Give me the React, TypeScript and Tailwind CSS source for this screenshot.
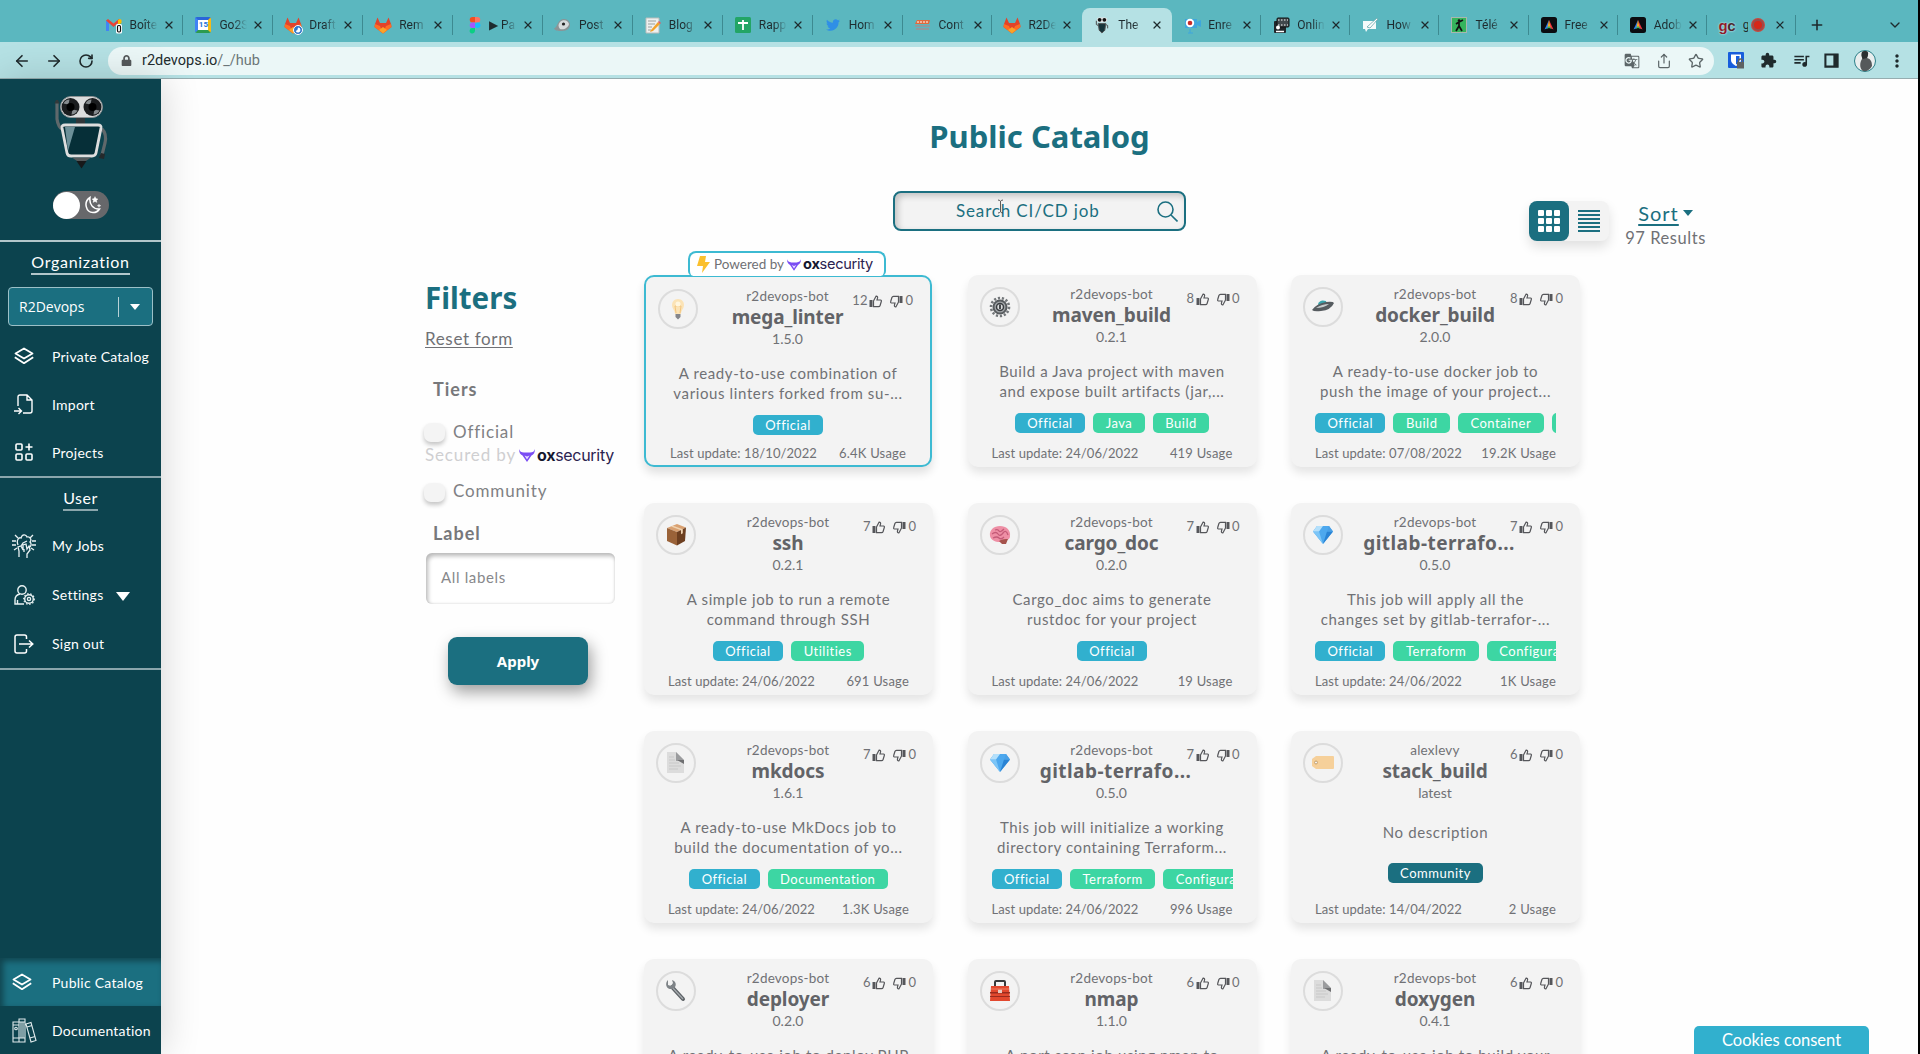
import React from "react";
import { ArrowLeft, ArrowRight, RotateCw, Plus, ChevronDown, X, Star, Share } from "lucide-react";
import { FaTwitter, FaLock } from "react-icons/fa";
import { MdExtension, MdQueueMusic, MdMoreVert, MdGTranslate } from "react-icons/md";

/* ---------- browser tab icons ---------- */

const Gitlab = () => (
  <svg viewBox="0 0 18 17" className="h-[17px] w-[18px]">
    <path d="M1 7 3.500 0.500 6 6h6l2.500-5.500L17 7l.5 3L9 16.500.5 10z" fill="#e24329" />
    <path d="M9 16.500.5 10 1 7l5 2zM9 16.500l8.500-6.500L17 7l-5 2z" fill="#fc6d26" />
    <path d="M9 16.500 5 13l4-3 4 3z" fill="#fca326" />
  </svg>
);

const TabIcon = ({ kind }: { kind: string }) => {
  switch (kind) {
    case "gmail":
      return (
        <svg viewBox="0 0 18 18" className="size-[18px]">
          <path d="M1 4v11h3V7z" fill="#4285f4" />
          <path d="M13 7v8h3V4z" fill="#34a853" />
          <path d="M1 4.500 3 3l5.500 4.500L14 3l2 1.500-7.500 6.500z" fill="#ea4335" />
          <path d="m13 4 2-1 1.500 1v3L13 9z" fill="#fbbc04" />
          <rect x="11" y="8" width="6" height="9.500" rx="1.500" fill="#fff" />
          <rect x="12.500" y="9.500" width="3" height="6.500" rx="1.200" fill="none" stroke="#111" strokeWidth="1.200" />
        </svg>
      );
    case "calendar":
      return (
        <div className="flex size-[16px] items-center justify-center rounded-[2px] border-[3px] border-t-[#2a66d9] border-r-[#f6bb16] border-b-[#2c9b50] border-l-[#3f83f5] bg-white text-[8px] font-bold text-[#2474d8]">15</div>
      );
    case "draft":
      return (
        <div className="relative">
          <Gitlab />
          <svg viewBox="0 0 10 10" className="absolute -right-px -bottom-px size-[10px]">
            <circle cx="5" cy="5" r="4.500" fill="#2f76c9" stroke="#fff" />
            <path d="M5 2.500a2.500 2.500 0 1 1-2.300 3.500Q5 5.500 5 2.500z" fill="#fff" />
          </svg>
        </div>
      );
    case "gitlab":
      return <Gitlab />;
    case "figma":
      return (
        <svg viewBox="0 0 12 17" className="ml-1 h-[17px] w-3">
          <path d="M6 0H3.500a2.700 2.700 0 0 0 0 5.500H6z" fill="#f24e1e" />
          <path d="M6 0h2.500a2.700 2.700 0 0 1 0 5.500H6z" fill="#ff7262" />
          <path d="M6 5.500H3.500a2.700 2.700 0 0 0 0 5.500H6z" fill="#a259ff" />
          <circle cx="8.700" cy="8.250" r="2.750" fill="#1abcfe" />
          <path d="M6 11H3.500a2.700 2.700 0 1 0 2.500 3z" fill="#0acf83" />
        </svg>
      );
    case "post":
      return (
        <svg viewBox="0 0 17 14" className="h-[14px] w-[17px]">
          <path d="M1 10C3 9 4 1 10 1c4 0 6 3 6 6s-3 6-8 6c-4 0-7 0-8-3z" fill="#8b9496" />
          <path d="M6 4c3-3 8-2 9 2-1 4-5 6-9 5-2-2-2-5 0-7z" fill="#d6dbdc" />
          <circle cx="9.500" cy="6" r="1.600" fill="#222" />
        </svg>
      );
    case "memo":
      return (
        <svg viewBox="0 0 16 17" className="h-[17px] w-4">
          <path d="M1 1h13v15H1z" fill="#eef0ef" stroke="#b9bdbb" />
          <path d="M3 4h8M3 7h7M3 10h4M3 13h3" stroke="#9aa09e" />
          <path d="m6 13 7-8 2 2-7 7-3 1z" fill="#f2a32b" />
          <path d="m13 5 1-1 2 2-1 1z" fill="#e25a6a" />
        </svg>
      );
    case "sheets":
      return (
        <svg viewBox="0 0 16 16" className="size-4">
          <rect width="16" height="16" rx="1.500" fill="#23a566" />
          <path d="M8 3v10M3 6h10" stroke="#fff" strokeWidth="1.800" />
        </svg>
      );
    case "twitter":
      return <FaTwitter className="size-[14px] text-[#2f8fe6]" />;
    case "cont":
      return (
        <svg viewBox="0 0 17 12" className="h-3 w-[17px]">
          <path d="M1 5 3 1h13l-1 4z" fill="#e06a3c" />
          <path d="M3 3h11" stroke="#fff" strokeDasharray="2 1" />
          <path d="M1 7h15M2 10h13" stroke="#8f9a9e" strokeWidth="2" />
        </svg>
      );
    case "robot":
      return (
        <svg viewBox="0 0 14 18" className="h-[17px] w-[14px]">
          <rect x="1.500" y="0.500" width="11" height="5" rx="2.500" fill="#e4e4e4" />
          <circle cx="4.500" cy="3" r="2" fill="#111" />
          <circle cx="9.500" cy="3" r="2" fill="#111" />
          <path d="M3 7h8l-1 7-3 3-3-3z" fill="#16343a" stroke="#555" />
          <path d="M1 4v4l2 1M13 12V9l-2-1" fill="none" stroke="#444" />
        </svg>
      );
    case "enre":
      return (
        <svg viewBox="0 0 17 17" className="h-[17px] w-[17px]">
          <path d="M1 2h12v9H1zM13 5l4-2v7l-4-2z" fill="#3ea6dd" />
          <circle cx="6" cy="6" r="4.200" fill="#fff" />
          <circle cx="6" cy="6" r="2.300" fill="#c92a2a" />
          <path d="M6 12v4M4 16h5" stroke="#3ea6dd" />
        </svg>
      );
    case "online":
      return (
        <svg viewBox="0 0 17 17" className="h-[17px] w-[17px]">
          <rect x="1" y="4" width="12" height="12" rx="1" fill="#20262a" />
          <rect x="4" y="1" width="12" height="9" rx="1" fill="#41494d" stroke="#111" />
          <path d="M5 3h10M5 8h10" stroke="#fff" strokeDasharray="1.500 1.500" />
          <circle cx="5" cy="10.500" r="2" fill="#fff" />
          <path d="M3 14.500h8" stroke="#fff" strokeWidth="1.500" />
        </svg>
      );
    case "how":
      return (
        <svg viewBox="0 0 17 16" className="h-4 w-[17px]">
          <path d="M1 4h10l3 1v7H6l-2 3-1-3H1z" fill="#f4fbfb" />
          <path d="m5 10 10-9 1 1-8 9z" fill="#fff" stroke="#66a8ac" strokeWidth=".8" />
        </svg>
      );
    case "tele":
      return (
        <svg viewBox="0 0 16 16" className="size-4">
          <rect x=".5" y=".5" width="15" height="15" fill="#35b45c" stroke="#a9b7ae" />
          <circle cx="8" cy="3.500" r="1.300" fill="#111" />
          <path d="m8 5-3 2M8 5l4-2M8 5v5M8 9l-3 5M8 9l3 5" stroke="#111" strokeWidth="1.700" />
        </svg>
      );
    case "adobe":
      return (
        <svg viewBox="0 0 16 16" className="size-4">
          <rect width="16" height="16" rx="2.500" fill="#0b0c10" />
          <path d="M8 3 3.500 12.500 7 11z" fill="#2d7df0" />
          <path d="m8 3 4.500 9.500L9 11z" fill="#ef3340" />
          <path d="M8 3 6.500 10h3z" fill="#f7a529" />
          <path d="m5 12 3-3 3 3-3-1z" fill="#37b75b" />
        </svg>
      );
    case "gc":
      return (
        <span className="font-['Liberation_Sans'] text-[15px] leading-none font-bold tracking-[-0.5px] text-[#8d1c2c] [text-shadow:0_0_2px_#fff]">
          g<span className="text-[#4a2a30]">c</span>
        </span>
      );
    default:
      return null;
  }
};

const tabs = [
  { kind: "gmail", label: "Boîte" },
  { kind: "calendar", label: "Go2S" },
  { kind: "draft", label: "Draft" },
  { kind: "gitlab", label: "Rem" },
  { kind: "figma", label: "▶ Pa" },
  { kind: "post", label: "Post" },
  { kind: "memo", label: "Blog" },
  { kind: "sheets", label: "Rapp" },
  { kind: "twitter", label: "Hom" },
  { kind: "cont", label: "Cont" },
  { kind: "gitlab", label: "R2De" },
  { kind: "robot", label: "The", active: true },
  { kind: "enre", label: "Enre" },
  { kind: "online", label: "Onlin" },
  { kind: "how", label: "How" },
  { kind: "tele", label: "Télé" },
  { kind: "adobe", label: "Free" },
  { kind: "adobe", label: "Adob" },
  { kind: "gc", label: "g", recording: true },
];

const BrowserBar = () => (
  <header className="font-[Roboto,sans-serif]">
    <div className="flex h-[42px] items-stretch bg-[#5bb7bf] pt-2 pl-[93.500px] text-[12px] text-[#1e2b2e]">
      {tabs.map((t, i) => (
        <div
          key={i}
          className={
            t.active
              ? "relative flex w-[89.900px] shrink-0 items-center rounded-t-lg bg-[#b5e1e4] pl-[11px]"
              : i < 11
                ? "relative flex w-[89.900px] shrink-0 items-center pl-[11px]"
                : "relative flex w-[89.100px] shrink-0 items-center pl-[11px]"
          }
        >
          <span className="flex w-[18px] shrink-0 justify-center">
            <TabIcon kind={t.kind} />
          </span>
          <span
            className={
              t.recording
                ? "ml-[7px] w-[5px] overflow-hidden whitespace-nowrap"
                : "ml-[7px] w-[28px] overflow-hidden whitespace-nowrap [mask-image:linear-gradient(to_right,#000_55%,transparent)]"
            }
          >
            {t.label}
          </span>
          {t.recording && <span className="ml-1 size-3 rounded-full border-2 border-[#9b4a49] bg-[#d62718] ring-1 ring-[#c9483d]" />}
          <X className={t.recording ? "ml-[10px] size-3" : "ml-[5px] size-3"} strokeWidth={2.400} />
          {!t.active && i !== 10 && <span className="absolute top-[7px] right-0 h-5 w-px bg-[#3d8a91]" />}
        </div>
      ))}
      <Plus className="mt-[9px] ml-[13px] size-4" strokeWidth={2.400} />
      <ChevronDown className="mt-[9px] ml-[62px] size-4" strokeWidth={2} />
    </div>
    <div className="flex h-[37px] items-center border-b border-[#96adb0] bg-[#b5e1e4] pt-px pl-[13px] text-[#1f2a2c]">
      <ArrowLeft className="size-[18px]" strokeWidth={2.200} />
      <ArrowRight className="ml-[14px] size-[18px]" strokeWidth={2.200} />
      <RotateCw className="ml-[15px] size-4" strokeWidth={2.400} />
      <div className="ml-[14px] flex h-7 w-[1606px] items-center rounded-full bg-[#ebf7f7] pl-[13px]">
        <FaLock className="size-[11px] text-[#55595b]" />
        <span className="ml-[10px] text-[14.500px] text-[#222c2e]">
          r2devops.io<span className="text-[#6c7678]">/_/hub</span>
        </span>
        <div className="mr-[10px] ml-auto flex items-center gap-4 text-[#5c6668]">
          <MdGTranslate className="size-4" />
          <Share className="size-4" strokeWidth={1.800} />
          <Star className="size-4" strokeWidth={2} />
        </div>
      </div>
      <div className="ml-[14px] flex items-center gap-[15px]">
        <svg viewBox="0 0 17 17" className="size-[17px]">
          <rect width="16" height="16" rx="1" fill="#175ddc" />
          <path d="M3 2.500h10V8c0 3-2.500 4.500-5 6-2.500-1.500-5-3-5-6z" fill="#fff" />
          <path d="M8 4v8.500c2-1.200 3.500-2.500 3.500-4.500V4z" fill="#175ddc" />
          <rect x="9" y="10" width="7" height="6.500" fill="#5e6263" />
          <path d="M10.500 10V9a2 2 0 0 1 4 0v1" fill="none" stroke="#5e6263" strokeWidth="1.300" />
        </svg>
        <MdExtension className="size-[17px]" />
        <MdQueueMusic className="-mr-0.5 size-[19px]" />
        <svg viewBox="0 0 16 16" className="size-[15px]">
          <path d="M1.500 1.500h13v13h-13z" fill="none" stroke="currentColor" strokeWidth="2.200" />
          <path d="M10 1h5v14h-5z" fill="currentColor" />
        </svg>
        <svg viewBox="0 0 22 22" className="size-[22px]">
          <circle cx="11" cy="11" r="10.500" fill="#e9eeee" stroke="#2b7f88" />
          <path d="M8 2c3-2 7-1 6 3l-1 3c4 1 5 4 5 8-2 4-6 6-9 5-4-3-3-9-1-12z" fill="#55595b" />
          <path d="M8 2c3-2 7-1 6 3l-1 3-4 1c-2-2-2-5-1-7z" fill="#2b2f31" />
        </svg>
        <MdMoreVert className="-ml-1 size-5" />
      </div>
    </div>
  </header>
);

/* ---------- sidebar ---------- */

const Robot = () => (
  <svg viewBox="0 0 56 76" className="h-[76px] w-14">
    <path d="M4 8v16q1 8 6 11" fill="none" stroke="#5f686b" strokeWidth="3.200" />
    <path d="M1.500 8.500 3 5h2l1.500 3.500" fill="#33393b" />
    <path d="M49 34q5 5 3 14l-3 12" fill="none" stroke="#5f686b" strokeWidth="3.200" />
    <path d="m46 63 2-5 4 1-1 5z" fill="#24292b" />
    <rect x="23" y="23" width="9" height="6" fill="#30373a" />
    <rect x="7.500" y="1.500" width="42" height="21" rx="10.500" fill="#dcdddd" stroke="#8d9294" />
    <circle cx="17.500" cy="12" r="9" fill="#1b1d1f" />
    <circle cx="39.500" cy="12" r="9" fill="#1b1d1f" />
    <path d="M10.500 8.500q2-4 6-4l-1 5zM24.500 15.500q-2 4-6 4l1-5zM32.500 8.500q2-4 6-4l-1 5zM46.500 15.500q-2 4-6 4l1-5z" fill="#868b8e" />
    <circle cx="17.500" cy="12" r="4" fill="#000" />
    <circle cx="39.500" cy="12" r="4" fill="#000" />
    <path d="M12 30h33q3.500 0 3 3l-5 25q-.6 3-4 3H18q-3.500 0-4-3L9 33q-.5-3 3-3z" fill="#062f38" stroke="#dedede" strokeWidth="2.800" />
    <path d="M12 32h10l-7 24z" fill="#6c9099" />
    <path d="M19 62.500h19l-5 3.500h-9z" fill="#54595b" />
    <path d="M23.500 66h10l-5 7.500z" fill="#17191a" />
  </svg>
);

const LayersIcon = () => (
  <svg viewBox="0 0 20 18" className="h-[18px] w-5" fill="none" stroke="#fff" strokeWidth="1.800" strokeLinejoin="round">
    <path d="M10 1.500 18.500 6.500 10 11.500 1.500 6.500z" />
    <path d="m.8 10.300 9.200 5.900 9.200-5.900" />
  </svg>
);
const ImportIcon = () => (
  <svg viewBox="0 0 20 21" className="h-[21px] w-5" fill="none" stroke="#fff" strokeWidth="1.400">
    <path d="M4 12V3q0-2 2-2h7l5 5v11q0 2-2 2H9M13 1v5h5M0 17h7M4.500 14l3 3-3 3" />
  </svg>
);
const ProjectsIcon = () => (
  <svg viewBox="0 0 18 18" className="size-[18px]" fill="none" stroke="#fff" strokeWidth="1.600">
    <rect x="1" y="1" width="6" height="6" rx="1" />
    <rect x="1" y="11" width="6" height="6" rx="1" />
    <rect x="11" y="11" width="6" height="6" rx="1" />
    <path d="M14 .5v7M10.500 4h7" />
  </svg>
);
const JobsIcon = () => (
  <svg viewBox="0 0 24 25" className="h-[25px] w-6" fill="none" stroke="#e9f2f3" strokeWidth="1.300">
    <path d="M6 12c-2-5 1-8 3-7 1-4 5-4 6-1 3-1 5 3 3 5 2 2 1 5-1 5M7 24v-6l-1-4 3-1 2 4v-5l3-1 1 5 2-3 1 4-3 4v5M9 13l2-3 4-2M12 19v-3M0 8h4M0 12h4M20 8h4M20 12h4M3 2l3 3M21 2l-3 3M2 17l3-2M22 17l-3-2" />
  </svg>
);
const SettingsIcon = () => (
  <svg viewBox="0 0 21 20" className="h-5 w-[21px]" fill="none" stroke="#e9f2f3" strokeWidth="1.400">
    <circle cx="8" cy="5" r="4.200" />
    <path d="M10 19H1v-4q0-5 5-6M3.500 19v-4" />
    <circle cx="15" cy="14" r="4.300" />
    <circle cx="15" cy="14" r="1.600" />
    <circle cx="15" cy="14" r="5.300" strokeDasharray="1.500 1.700" strokeWidth="1.200" />
  </svg>
);
const SignOutIcon = () => (
  <svg viewBox="0 0 20 20" className="size-5" fill="none" stroke="#fff" strokeWidth="1.500">
    <path d="M12.500 5V3q0-2-2-2H3Q1 1 1 3v14q0 2 2 2h7.500q2 0 2-2v-2M5 10h13M15 6.500 18.800 10 15 13.500" />
  </svg>
);
const BooksIcon = () => (
  <svg viewBox="0 0 25 25" className="h-[25px] w-[25px]" fill="none" stroke="#dfeaec" strokeWidth="1.100">
    <path d="M1 4h6v20H1zM7 1h6v23H7zM1 7h6M1 20h6M7 4h6M7 20h6M9 4v16M11 4v16M14 6l5-1.500 5 18-5 1.500zM15 9l5-1.500M18 20l5-1.500" />
    <circle cx="4" cy="10.500" r="1.300" />
  </svg>
);

const NavItem = ({ icon, label, caret }: { icon: React.ReactNode; label: string; caret?: boolean }) => (
  <div className="flex h-full w-full items-center">
    <span className="flex w-[48px] shrink-0 justify-center">{icon}</span>
    <span className="ml-1 text-[14px] whitespace-nowrap tracking-[0.250px] text-white">{label}</span>
    {caret && <span className="mt-1 ml-[13px] border-x-[7.500px] border-t-[9px] border-x-transparent border-t-white" />}
  </div>
);

const Sidebar = () => (
  <aside className="z-10 flex w-[161px] shrink-0 flex-col bg-[#0c434e] shadow-[2px_0_36px_rgba(0,0,0,0.16)]">
    <div className="flex h-[163px] flex-col items-center border-b-2 border-[#b3c6ca] pt-[16px]">
      <Robot />
      <div className="mt-[20px] flex h-7 w-14 items-center rounded-full bg-[#67686b]">
        <span className="size-[27px] rounded-full bg-white" />
        <svg viewBox="0 0 18 18" className="ml-1 size-[18px]" fill="none" stroke="#fff" strokeWidth="1.500">
          <path d="M6 1.500C-1 6 2 16.500 9 16.500c3 0 5-1 6.500-3.500C9 13.500 5 8 6 1.500z" />
          <path d="m11 .5 1 2 2 .5-1.500 1.500.5 2-2-1-2 1 .5-2L8 3l2-.5zM15 8l.5 1.300 1.500.4-1.500.5L15 11.500l-.5-1.300-1.300-.5 1.300-.4z" fill="#fff" strokeWidth=".3" />
        </svg>
      </div>
    </div>
    <div className="flex h-[236px] flex-col border-b-2 border-[#8ba6ac] pt-[10px]">
      <span className="mx-auto h-[23px] border-b-2 border-[#b3c6ca] text-[16px] leading-[20px] tracking-[0.700px] text-white">Organization</span>
      <div className="mx-2 mt-3 flex h-[39px] shrink-0 items-center rounded-[4px] border border-[#9cc0c7] bg-[#1b6f80] pl-[10px]">
        <span className="w-[99px] font-['Open_Sans',sans-serif] text-[14px] text-white">R2Devops</span>
        <span className="h-5 w-px bg-[#b8d2d7]" />
        <span className="ml-[11px] border-x-[5.500px] border-t-[6px] border-x-transparent border-t-white" />
      </div>
      <div className="mt-[6px] h-12"><NavItem icon={<LayersIcon />} label="Private Catalog" /></div>
      <div className="h-12"><NavItem icon={<ImportIcon />} label="Import" /></div>
      <div className="h-12"><NavItem icon={<ProjectsIcon />} label="Projects" /></div>
    </div>
    <div className="flex h-[192px] flex-col border-b-2 border-[#8ba6ac] pt-[9px]">
      <span className="mx-auto h-[24px] shrink-0 border-b-2 border-[#8ba6ac] text-[16px] leading-[22px] tracking-[0.500px] text-white">User</span>
      <div className="mt-[10px] h-[49px]"><NavItem icon={<JobsIcon />} label="My Jobs" /></div>
      <div className="h-[49px]"><NavItem icon={<SettingsIcon />} label="Settings" caret /></div>
      <div className="h-[49px]"><NavItem icon={<SignOutIcon />} label="Sign out" /></div>
    </div>
    <div className="mt-auto h-12 bg-[#1b6f80] shadow-[inset_3px_3px_6px_rgba(0,0,0,0.4)]">
      <NavItem icon={<span className="-ml-1"><LayersIcon /></span>} label="Public Catalog" />
    </div>
    <div className="h-12"><NavItem icon={<BooksIcon />} label="Documentation" /></div>
  </aside>
);

/* ---------- shared bits ---------- */

const OxLogo = ({ small }: { small?: boolean }) => (
  <span className={small ? "flex items-center text-[14.600px]" : "flex items-center text-[16px]"}>
    <svg viewBox="0 0 16 13" className={small ? "h-3 w-[14px]" : "h-[13px] w-4"}>
      <path d="M0 0q1 3.500 5 3.500h6Q15 3.500 16 0q0 5-3.500 6.500L8 13 3.500 6.500Q0 5 0 0z" fill="#7a4df3" />
      <path d="m5.500 6.500 2.500 1 2.500-1L8 10.500z" fill="#e9e2ff" />
    </svg>
    <span className="ml-[2px] font-[Inter,sans-serif] leading-none tracking-[-0.300px] text-[#2b2350]">
      <b className="text-[#15182f]">ox</b>security
    </span>
  </span>
);

const ThumbUp = () => (
  <svg viewBox="0 0 13 13" className="size-[13px]">
    <path d="M.5 5h3v7h-3z" fill="#55565a" />
    <path d="M4.500 6 7 1.200q2-.2 1.500 2L8 5h3.500q1.200.3.800 1.500l-1.200 4q-.4 1.200-1.600 1.200h-5z" fill="none" stroke="#55565a" strokeWidth="1.200" />
  </svg>
);

/* ---------- job pictures ---------- */

const JobIcon = ({ kind }: { kind: string }) => {
  switch (kind) {
    case "bulb":
      return (
        <svg viewBox="0 0 22 22" className="size-[22px]">
          <path d="M11 1c4 0 6 3 6 6 0 4-3 5-3 9H8c0-4-3-5-3-9 0-3 2-6 6-6z" fill="#fbe3b6" />
          <path d="M9 15 8 8h6l-1 7" fill="none" stroke="#f3c57d" />
          <circle cx="11" cy="6" r="2.500" fill="#fff6df" />
          <path d="M8.500 16h5v3L11 21.500 8.500 19z" fill="#85868a" />
        </svg>
      );
    case "gear":
      return (
        <svg viewBox="0 0 22 22" className="size-[22px]">
          <circle cx="11" cy="11" r="9" fill="none" stroke="#73777a" strokeWidth="2.600" strokeDasharray="2.200 1.800" />
          <circle cx="11" cy="11" r="6.500" fill="#a4a8ab" stroke="#585c5f" strokeWidth="2" />
          <circle cx="11" cy="11" r="3.500" fill="#d9dbdc" stroke="#3a3d40" strokeWidth="1.500" />
          <path d="M11 8.500v4.500" stroke="#35383b" strokeWidth="1.800" />
        </svg>
      );
    case "ufo":
      return (
        <svg viewBox="0 0 22 22" className="size-[22px]">
          <path d="M6 8q2-5 8-3l1 5-7 3z" fill="#38a3ab" />
          <path d="M0 14Q4 8 14 6q7-1 8 1-3 7-13 8-7 1-9-1z" fill="#565c60" />
          <path d="M4 12q6-4 13-4-5 4-13 4z" fill="#c8cdce" />
        </svg>
      );
    case "box":
      return (
        <svg viewBox="0 0 22 22" className="size-[22px]">
          <path d="M12 0 21 3.500 12 8 2 4z" fill="#d9a172" />
          <path d="m2 4 10 4v13.500L2 17z" fill="#9a6238" />
          <path d="m21 3.500-9 4.500v13.500l8-4.500z" fill="#6d3f20" />
          <path d="m6 2.500 10 3.700v4l1.800-1V5.300L8 1.700z" fill="#f0d3b0" />
        </svg>
      );
    case "brain":
      return (
        <svg viewBox="0 0 22 22" className="size-[22px]">
          <path d="M1 12C0 6 5 2 11 2s11 4 10 10c0 3-2 4-5 4l-1 4-4-2c-5 0-9-2-10-6z" fill="#ee8fa5" />
          <path d="M10 17c3-2 7-2 9-2l-2 5h-4z" fill="#a5524c" />
          <path d="M3 10q4-3 6 0t5-1 5 2M6 6q3-1 4 1t5-2M4 14q4-2 6 0t5-1" fill="none" stroke="#c45b78" strokeWidth="1.300" />
        </svg>
      );
    case "gem":
      return (
        <svg viewBox="0 0 22 22" className="size-[22px]">
          <path d="M5 2h12l4 5.500L11 20 1 7.500z" fill="#4da8ee" />
          <path d="M1 7.500h6L11 20z" fill="#7cc5f7" />
          <path d="M21 7.500h-6L11 20z" fill="#2a83d4" />
          <path d="m5 2 2 5.500H1zM5 2h6L7 7.500z" fill="#b4e0fb" />
          <path d="m17 2-2 5.500h6z" fill="#4aa0e6" />
        </svg>
      );
    case "page":
      return (
        <svg viewBox="0 0 22 22" className="size-[22px]">
          <path d="M2 0h9l8 8v13H2z" fill="#dcdcdc" />
          <path d="m11 0 8 8-8 1z" fill="#9b9c9e" />
          <path d="M12 8h7v4z" fill="#6e6f71" />
          <path d="M4 5h5M4 8h6M4 11h10M4 14h12M4 17h9" stroke="#c8c8c8" />
        </svg>
      );
    case "label":
      return (
        <svg viewBox="0 0 22 22" className="size-[22px]">
          <path d="M4 4h17q1 0 1 1v11q0 1-1 1H4l-4-3V7z" fill="#f6d09a" />
          <circle cx="4" cy="10.500" r="1.500" fill="#f3f3f3" stroke="#c5a06c" />
        </svg>
      );
    case "wrench":
      return (
        <svg viewBox="0 0 22 22" className="size-[22px]">
          <path d="m7 7 11 12" stroke="#5d6266" strokeWidth="4" strokeLinecap="round" />
          <path d="m7 7 11 12" stroke="#a5aaae" strokeWidth="1.300" />
          <path d="M3 0v5l3 1 2-3-1-3c5 1 5 8 0 9S-1 4 3 0z" fill="#7e8387" />
        </svg>
      );
    case "toolbox":
      return (
        <svg viewBox="0 0 24 24" className="size-6">
          <path d="M7 8V3q0-1 1-1h8q1 0 1 1v5" fill="none" stroke="#37393b" strokeWidth="2" />
          <path d="M3 7h18l1 15H2z" fill="#e2482e" />
          <path d="M2 13h20v1.500H2zM2 17h20v1H2z" fill="#9a2a1d" />
          <path d="M10 10.500h4v3.500h-4z" fill="#e9c9c0" />
          <path d="M3 10h18" stroke="#ef7c61" />
        </svg>
      );
    default:
      return null;
  }
};

type Job = {
  icon: string;
  owner?: string;
  name: string;
  version: string;
  likes: number;
  lines: string[];
  tags: string[];
  updated: string;
  usage: string;
  sponsored?: boolean;
};

const jobs: Job[] = [
  { icon: "bulb", name: "mega_linter", version: "1.5.0", likes: 12, lines: ["A ready-to-use combination of", "various linters forked from su-..."], tags: ["Official"], updated: "18/10/2022", usage: "6.4K", sponsored: true },
  { icon: "gear", name: "maven_build", version: "0.2.1", likes: 8, lines: ["Build a Java project with maven", "and expose built artifacts (jar,..."], tags: ["Official", "Java", "Build"], updated: "24/06/2022", usage: "419" },
  { icon: "ufo", name: "docker_build", version: "2.0.0", likes: 8, lines: ["A ready-to-use docker job to", "push the image of your project..."], tags: ["Official", "Build", "Container", "Docker"], updated: "07/08/2022", usage: "19.2K" },
  { icon: "box", name: "ssh", version: "0.2.1", likes: 7, lines: ["A simple job to run a remote", "command through SSH"], tags: ["Official", "Utilities"], updated: "24/06/2022", usage: "691" },
  { icon: "brain", name: "cargo_doc", version: "0.2.0", likes: 7, lines: ["Cargo_doc aims to generate", "rustdoc for your project"], tags: ["Official"], updated: "24/06/2022", usage: "19" },
  { icon: "gem", name: "gitlab-terrafo...", version: "0.5.0", likes: 7, lines: ["This job will apply all the", "changes set by gitlab-terrafor-..."], tags: ["Official", "Terraform", "Configuration"], updated: "24/06/2022", usage: "1K" },
  { icon: "page", name: "mkdocs", version: "1.6.1", likes: 7, lines: ["A ready-to-use MkDocs job to", "build the documentation of yo..."], tags: ["Official", "Documentation"], updated: "24/06/2022", usage: "1.3K" },
  { icon: "gem", name: "gitlab-terrafo...", version: "0.5.0", likes: 7, lines: ["This job will initialize a working", "directory containing Terraform..."], tags: ["Official", "Terraform", "Configuration"], updated: "24/06/2022", usage: "996" },
  { icon: "label", owner: "alexlevy", name: "stack_build", version: "latest", likes: 6, lines: ["No description"], tags: ["Community"], updated: "14/04/2022", usage: "2" },
  { icon: "wrench", name: "deployer", version: "0.2.0", likes: 6, lines: ["A ready-to-use job to deploy PHP"], tags: [], updated: "", usage: "" },
  { icon: "toolbox", name: "nmap", version: "1.1.0", likes: 6, lines: ["A port scan job using nmap to"], tags: [], updated: "", usage: "" },
  { icon: "page", name: "doxygen", version: "0.4.1", likes: 6, lines: ["A ready-to-use job to build your"], tags: [], updated: "", usage: "" },
];

const tagColor = (t: string) =>
  t === "Official" ? "bg-[#31b0ce]" : t === "Community" ? "bg-[#1b6f80]" : "bg-[#3dd6a3]";

const JobCard = ({ job }: { job: Job }) => {
  const short = job.lines[0] === "No description";
  return (
    <article
      className={
        job.sponsored
          ? "relative flex h-[192px] w-[288px] flex-col rounded-[10px] border-2 border-[#3dbad2] bg-[#f3f3f3] pb-0.5 text-[#707175] shadow-[0_6px_10px_rgba(0,0,0,0.12)]"
          : "relative flex h-[192px] w-[289px] flex-col rounded-[10px] bg-[#f3f3f3] pb-[4px] text-[#707175] shadow-[0_6px_10px_rgba(0,0,0,0.1)]"
      }
    >
      {job.sponsored && (
        <div className="absolute -top-[26px] left-[42px] flex h-[25px] w-[198px] items-center rounded-[8px] rounded-b-[5px] border-2 border-b-0 border-[#3dbad2] bg-white pl-[7px]">
          <svg viewBox="0 0 13 17" className="h-[17px] w-[13px]">
            <path d="M3 0h6L8 6h5L5 17l1-7H0z" fill="#fbc02d" />
          </svg>
          <span className="mr-[3px] ml-[4px] text-[13.500px] whitespace-nowrap">Powered by</span>
          <OxLogo small />
        </div>
      )}
      <div className="grid h-[72px] shrink-0 pt-[10px]">
        <div className="mt-[2px] ml-3 flex size-10 items-center justify-center justify-self-start rounded-full border-2 border-[#dcdcdc] [grid-area:1/1]">
          <JobIcon kind={job.icon} />
        </div>
        <div className="flex flex-col items-center justify-self-center pr-px text-center [grid-area:1/1]">
          <span className="h-[18px] text-[13.500px] leading-[18px] tracking-[0.200px]">{job.owner ?? "r2devops-bot"}</span>
          <h3
            className={
              job.name.includes("...")
                ? "h-6 pl-2 font-['Noto_Sans',sans-serif] text-[19px] leading-6 font-bold tracking-[0.450px] text-[#626367]"
                : "h-6 font-['Noto_Sans',sans-serif] text-[19px] leading-6 font-bold tracking-[-0.100px] text-[#626367]"
            }
          >
            {job.name}
          </h3>
          <span className="h-5 text-[14px] leading-5">{job.version}</span>
        </div>
        <div className="mt-[4px] mr-[17px] flex h-5 items-center justify-self-end text-[13px] [grid-area:1/1]">
          <span className="mr-[2px]">{job.likes}</span>
          <ThumbUp />
          <span className="mr-[2px] ml-2 rotate-180">
            <ThumbUp />
          </span>
          <span>0</span>
        </div>
      </div>
      <div className={short ? "pt-[19px]" : "pt-[14px]"}>
        {job.lines.map((l) => (
          <p key={l} className="h-5 text-center text-[15px] leading-5 whitespace-nowrap tracking-[0.620px]">
            {l}
          </p>
        ))}
      </div>
      <div className={short ? "mx-6 mt-[21px] flex justify-center-safe gap-2 overflow-hidden" : "mx-6 mt-3 flex justify-center-safe gap-2 overflow-hidden"}>
        {job.tags.map((t) => (
          <span key={t} className={`h-5 shrink-0 rounded-[5px] px-[12.500px] text-[13px] leading-5 tracking-[0.500px] text-white ${tagColor(t)}`}>
            {t}
          </span>
        ))}
      </div>
      {job.updated && (
        <div className="mx-[24px] mt-auto flex h-[18px] items-center justify-between text-[13px] tracking-[0.080px]">
          <span>Last update: {job.updated}</span>
          <span className="tracking-[0.200px]">{job.usage} Usage</span>
        </div>
      )}
    </article>
  );
};

const CheckRow = ({ label }: { label: string }) => (
  <div className="-ml-px flex items-center">
    <span className="mt-0.5 h-[19px] w-[21px] rounded-[7px] bg-[#f4f4f4] shadow-[0_3px_4px_rgba(0,0,0,0.22)]" />
    <span className="ml-2 text-[17px] leading-5 tracking-[0.850px] text-[#808184]">{label}</span>
  </div>
);

const Filters = () => (
  <section className="mt-[26px] flex w-[190px] flex-col text-[#707175]">
    <h2 className="h-[46px] font-['Noto_Sans',sans-serif] text-[29.500px] leading-[46px] font-bold text-[#1b6f80]">Filters</h2>
    <a className="h-9 w-max text-[17px] leading-9 tracking-[0.650px] underline underline-offset-2">Reset form</a>
    <h4 className="h-16 pl-2 text-[18px] leading-[64px] font-bold tracking-[1px] text-[#77787b]">Tiers</h4>
    <div className="h-5"><CheckRow label="Official" /></div>
    <div className="flex h-7 items-center">
      <span className="mr-[3px] text-[17px] whitespace-nowrap tracking-[0.850px] text-[#cfcfd1]">Secured by</span>
      <OxLogo />
    </div>
    <div className="flex h-11 items-center"><CheckRow label="Community" /></div>
    <h4 className="h-10 pl-2 text-[18px] leading-10 font-bold tracking-[1px] text-[#77787b]">Label</h4>
    <div className="ml-px h-[51px] rounded-[6px] bg-white pl-[15px] text-[15px] leading-[48px] tracking-[0.650px] text-[#87888b] shadow-[inset_2px_3px_4px_rgba(0,0,0,0.28),inset_-1px_-1px_2px_rgba(0,0,0,0.08)]">All labels</div>
    <button className="mt-[33px] ml-[23px] h-12 w-[140px] rounded-[9px] bg-[#1b6f80] font-['Noto_Sans',sans-serif] text-[15px] font-bold text-white shadow-[3px_7px_16px_rgba(0,0,0,0.38)]">Apply</button>
  </section>
);

const Toolbar = () => (
  <div className="grid grid-cols-[1fr_293px_1fr]">
    <div className="col-start-2 flex h-10 items-center rounded-[8px] border-2 border-[#1b6f80] bg-[#f3f3f3] pl-[61px] text-[#1b6f80] shadow-[inset_3px_3px_6px_rgba(0,0,0,0.2)]">
      <span className="relative w-[150px] text-[17px] leading-6 whitespace-nowrap tracking-[0.850px]">
        Search CI/CD job
        <svg viewBox="0 0 5 14" className="absolute top-0 left-[42px] h-[15px] w-[5px]" fill="none" stroke="#333" strokeWidth=".8">
          <path d="M0 .5q2 0 2.500 1.500Q3 .5 5 .5M2.500 2v10M0 13.500q2 0 2.500-1.500.5 1.500 2.500 1.500" />
        </svg>
      </span>
      <svg viewBox="0 0 21 21" className="mr-[6px] ml-auto size-[21px]" fill="none" stroke="#1b6f80" strokeWidth="1.600">
        <circle cx="8.500" cy="8.500" r="7.500" />
        <path d="m14 14 6.500 6.500" />
      </svg>
    </div>
    <div className="flex pt-[10px] pl-[342.500px]">
      <div className="flex h-10 w-20 shrink-0 rounded-[8px] bg-[#f3f3f3] shadow-[0_6px_12px_rgba(0,0,0,0.12)]">
        <div className="flex size-10 items-center justify-center rounded-[8px] bg-[#1b6f80]">
          <div className="grid grid-cols-3 gap-[2px]">
            {Array.from({ length: 9 }, (_, i) => (
              <span key={i} className="size-[6px] rounded-[1px] bg-white" />
            ))}
          </div>
        </div>
        <div className="flex flex-1 flex-col items-center justify-center gap-[1.800px]">
          {Array.from({ length: 6 }, (_, i) => (
            <span key={i} className="h-[2.200px] w-[22px] bg-[#1b6f80]" />
          ))}
        </div>
      </div>
      <div className="flex w-[114px] shrink-0 flex-col items-center">
        <div className="flex h-6 items-center text-[20px] leading-6 text-[#1b6f80]">
          <span className="tracking-[1px] underline underline-offset-3">Sort</span>
          <span className="ml-1 border-x-[5px] border-t-[6px] border-x-transparent border-t-[#1b6f80]" />
        </div>
        <span className="h-6 text-[16.500px] leading-[26px] whitespace-nowrap tracking-[0.550px] text-[#707175]">97 Results</span>
      </div>
    </div>
  </div>
);

export default function App() {
  return (
    <div className="flex h-[1054px] w-[1920px] overflow-hidden bg-black">
      <div className="flex w-[1918px] flex-col overflow-hidden bg-[#fefefe] font-[Lato,sans-serif]">
        <BrowserBar />
        <div className="flex h-[975px]">
          <Sidebar />
          <main className="relative flex flex-1 flex-col overflow-hidden">
            <h1 className="h-[112px] shrink-0 text-center font-['Noto_Sans',sans-serif] text-[31px] leading-[114px] font-bold text-[#1b6f80]">Public Catalog</h1>
            <Toolbar />
            <div className="flex pl-[264px]">
              <Filters />
              <div className="mt-[26px] ml-[29px] grid shrink-0 grid-cols-[repeat(3,289px)] gap-x-[34.500px] gap-y-9">
                {jobs.map((j, i) => (
                  <JobCard key={i} job={j} />
                ))}
              </div>
            </div>
            <div className="absolute right-[49px] bottom-0 h-7 w-[175px] rounded-t-[5px] bg-[#31b0ce] text-center text-[16.500px] leading-[29px] text-white">Cookies consent</div>
          </main>
        </div>
      </div>
    </div>
  );
}
